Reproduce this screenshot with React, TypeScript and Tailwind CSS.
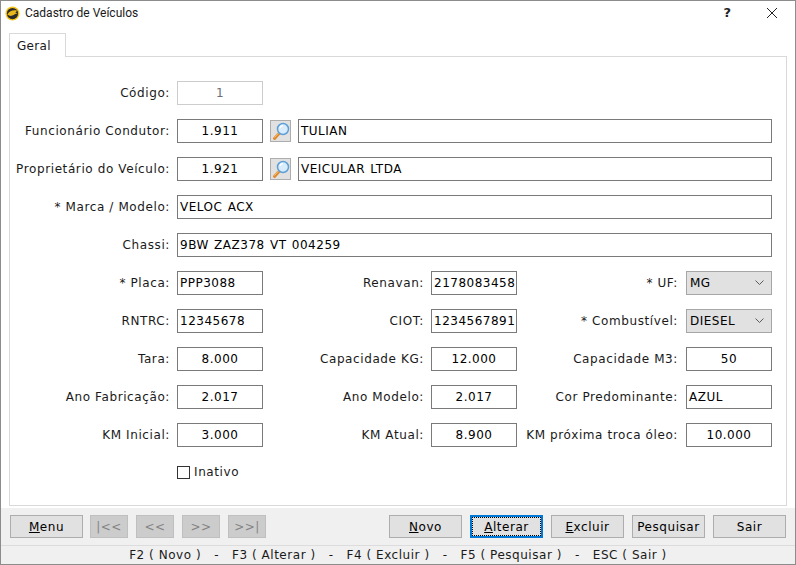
import React from 'react';

const font = "font-['DejaVu_Sans','Noto_Sans',sans-serif]";

const Label: React.FC<{ text: string; className: string }> = ({ text, className }) => (
  <label className={`text-right text-[12px] tracking-[0.6px] text-[#1a1a1a] shrink-0 ${className}`}>{text}</label>
);

const Input: React.FC<{ value: string; align?: 'left' | 'center'; className?: string; disabled?: boolean }> = ({
  value,
  align = 'center',
  className = 'w-[86px]',
  disabled,
}) => (
  <div
    className={`h-6 border flex items-center text-[12px] tracking-[0.5px] [word-spacing:1px] shrink-0 ${className} ${
      align === 'center' ? 'justify-center' : 'pl-[2px]'
    } ${disabled ? 'border-[#cccccc] text-[#6d6d7a]' : 'border-[#7a7a7a] text-black'}`}
  >
    {value}
  </div>
);

const Select: React.FC<{ value: string }> = ({ value }) => (
  <div className="w-[86px] h-6 border border-[#a6a6a6] bg-[#e1e1e1] flex items-center justify-between pl-[3px] pr-[7px] text-[12px] tracking-[0.5px] text-black shrink-0">
    <span>{value}</span>
    <svg width="9" height="6" viewBox="0 0 9 6" fill="none">
      <path d="M0.5 0.5 L4.5 4.5 L8.5 0.5" stroke="#5a5a5a" strokeWidth="1" />
    </svg>
  </div>
);

const SearchButton = () => (
  <div className="w-[21px] h-[22px] ml-[7px] mr-[7px] border border-[#adadad] bg-[#e1e1e1] flex items-center justify-center shrink-0">
    <svg width="18" height="19" viewBox="0 0 18 19">
      <path d="M7 11.5 L2.5 16.5" stroke="#e08a2c" strokeWidth="3" strokeLinecap="round" />
      <path d="M6.5 11 L2.5 15.5" stroke="#f7c27a" strokeWidth="1" />
      <circle cx="11" cy="7" r="5.5" fill="#d8ecfb" stroke="#5f9fd6" strokeWidth="1.5" />
      <path d="M8 6 A3.5 3.5 0 0 1 11 3.5" stroke="#ffffff" strokeWidth="1.5" fill="none" />
    </svg>
  </div>
);

const Row: React.FC<{ children: React.ReactNode }> = ({ children }) => (
  <div className="flex items-center h-6 mb-[14px] pr-[13px]">{children}</div>
);

const Triple: React.FC<{
  a: [string, React.ReactNode];
  b: [string, React.ReactNode];
  c: [string, React.ReactNode];
}> = ({ a, b, c }) => (
  <Row>
    <Label text={a[0]} className="w-[160px] mr-[7px]" />
    {a[1]}
    <Label text={b[0]} className="w-[161px] mr-[7px]" />
    {b[1]}
    <Label text={c[0]} className="w-[161px] mr-[8px]" />
    {c[1]}
  </Row>
);

const FootButton: React.FC<{ label: React.ReactNode; focused?: boolean; className?: string }> = ({
  label,
  focused,
  className = '',
}) => (
  <div
    className={`w-[73px] h-[23px] flex items-center justify-center text-[12px] tracking-[0.55px] text-black bg-[#e1e1e1] ${
      focused ? 'border-2 border-[#0078d7]' : 'border border-[#adadad]'
    } ${className}`}
  >
    {focused ? (
      <span className="w-full h-full flex items-center justify-center border border-dotted border-black">{label}</span>
    ) : (
      label
    )}
  </div>
);

const NavButton: React.FC<{ label: string }> = ({ label }) => (
  <div className="w-[38px] h-[23px] flex items-center justify-center border border-[#bfbfbf] bg-[#cccccc] text-[12px] tracking-[0.5px] text-[#838383]">
    {label}
  </div>
);

const App: React.FC = () => {
  return (
    <div className={`w-[796px] h-[565px] bg-[#f0f0f0] border border-[#8c8c8c] flex flex-col overflow-hidden ${font}`}>
      {/* Title bar */}
      <div className="h-[32px] bg-white flex items-center shrink-0 pl-[4px]">
        <svg width="15" height="15" viewBox="0 0 16 16" className="mb-[7px]">
          <circle cx="8" cy="8" r="7.5" fill="#f5c518" />
          <circle cx="8" cy="8" r="6" fill="#2b2b2b" />
          <path d="M2.5 9 C5 5 9 4 13 5 L11 7 L13.5 8 C10.5 8 9.5 10 7 10.5 C5.5 10.8 4 10 2.5 9 Z" fill="#e9b81a" />
        </svg>
        <span className="ml-[5px] mb-[8px] text-[12px] text-[#1a1a1a] font-['Roboto',sans-serif]">Cadastro de Veículos</span>
        <span className="ml-auto mb-[8px] mr-[35px] text-[13px] font-semibold text-[#222]">?</span>
        <svg width="12" height="12" viewBox="0 0 12 12" className="mb-[8px] mr-[17px]">
          <path d="M1 1 L11 11 M11 1 L1 11" stroke="#222" strokeWidth="1" />
        </svg>
      </div>

      {/* Tab + panel */}
      <div className="flex-1 bg-white px-[8px] pb-[8px] flex flex-col min-h-0">
        <div className="h-[24px] w-[57px] border border-b-0 border-[#d9d9d9] bg-white flex items-center pl-[7px] text-[12px] tracking-[0.3px] text-[#1a1a1a] shrink-0 relative z-10 -mb-px">
          Geral
        </div>
        <div className="h-[450px] border border-[#d9d9d9] pt-[24px] shrink-0">
          <Row>
            <Label text="Código:" className="w-[160px] mr-[7px]" />
            <Input value="1" disabled />
          </Row>
          <Row>
            <Label text="Funcionário Condutor:" className="w-[160px] mr-[7px]" />
            <Input value="1.911" />
            <SearchButton />
            <Input value="TULIAN" align="left" className="w-[474px]" />
          </Row>
          <Row>
            <Label text="Proprietário do Veículo:" className="w-[160px] mr-[7px]" />
            <Input value="1.921" />
            <SearchButton />
            <Input value="VEICULAR LTDA" align="left" className="w-[474px]" />
          </Row>
          <Row>
            <Label text="* Marca / Modelo:" className="w-[160px] mr-[7px]" />
            <Input value="VELOC ACX" align="left" className="w-[595px]" />
          </Row>
          <Row>
            <Label text="Chassi:" className="w-[160px] mr-[7px]" />
            <Input value="9BW ZAZ378 VT 004259" align="left" className="w-[595px]" />
          </Row>
          <Triple
            a={['* Placa:', <Input value="PPP3088" align="left" />]}
            b={['Renavan:', <Input value="2178083458" align="left" />]}
            c={['* UF:', <Select value="MG" />]}
          />
          <Triple
            a={['RNTRC:', <Input value="12345678" align="left" />]}
            b={['CIOT:', <Input value="1234567891" align="left" />]}
            c={['* Combustível:', <Select value="DIESEL" />]}
          />
          <Triple
            a={['Tara:', <Input value="8.000" />]}
            b={['Capacidade KG:', <Input value="12.000" />]}
            c={['Capacidade M3:', <Input value="50" />]}
          />
          <Triple
            a={['Ano Fabricação:', <Input value="2.017" />]}
            b={['Ano Modelo:', <Input value="2.017" />]}
            c={['Cor Predominante:', <Input value="AZUL" align="left" />]}
          />
          <Triple
            a={['KM Inicial:', <Input value="3.000" />]}
            b={['KM Atual:', <Input value="8.900" />]}
            c={['KM próxima troca óleo:', <Input value="10.000" />]}
          />
          <div className="flex items-center ml-[167px] mt-[4px] pt-[4px] h-[18px]">
            <span className="w-[13px] h-[13px] border border-[#333333] bg-white" />
            <span className="ml-[4px] text-[12px] tracking-[0.6px] text-[#1a1a1a]">Inativo</span>
          </div>
        </div>
      </div>

      {/* Buttons */}
      <div className="h-[37px] bg-[#f0f0f0] shrink-0 flex items-start pt-[7px] pl-[9px] pr-[9px]">
        <FootButton
          className="mr-[7px]"
          label={
            <span>
              <u>M</u>enu
            </span>
          }
        />
        <div className="flex gap-2">
          <NavButton label="|<<" />
          <NavButton label="<<" />
          <NavButton label=">>" />
          <NavButton label=">>|" />
        </div>
        <div className="flex gap-2 ml-auto">
          <FootButton label={<span><u>N</u>ovo</span>} />
          <FootButton focused label={<span><u>A</u>lterar</span>} />
          <FootButton label={<span><u>E</u>xcluir</span>} />
          <FootButton label="Pesquisar" />
          <FootButton label="Sair" />
        </div>
      </div>

      {/* Status bar */}
      <div className="h-[19px] shrink-0 border-t border-[#dcdcdc] bg-[#f0f0f0] flex items-center justify-center text-[12px] tracking-[0.53px] text-[#1a1a1a] whitespace-pre">
        {'F2 ( Novo )   -   F3 ( Alterar )   -   F4 ( Excluir )   -   F5 ( Pesquisar )   -   ESC ( Sair )'}
      </div>
    </div>
  );
};

export default App;
